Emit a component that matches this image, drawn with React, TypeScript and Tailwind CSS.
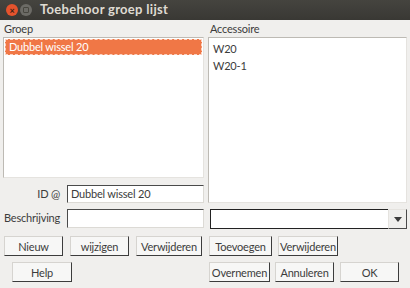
import React from "react";

function Btn({ children, className = "" }: { children: React.ReactNode; className?: string }) {
  return (
    <button
      className={`shrink-0 px-0 whitespace-nowrap h-[20px] bg-[#f7f7f6] border border-[#d6d4d0] border-r-[#3c3c3c] border-b-[#3c3c3c] text-[11px] tracking-[-0.2px] leading-none text-[#3c3c3c] flex items-center justify-center ${className}`}
    >
      {children}
    </button>
  );
}

export default function App() {
  return (
    <div className="w-[410px] h-[288px] bg-[#f0efed] text-[#3c3c3c] overflow-hidden font-['Lato','Liberation_Sans',sans-serif]">
      {/* title bar */}
      <div className="h-[20px] bg-gradient-to-b from-[#45443f] to-[#393834] flex items-center pl-[6px] gap-[2px]">
        <div className="w-[12px] h-[12px] rounded-full bg-[#e5532d] flex items-center justify-center text-[9px] leading-none text-[#3a1e12] font-bold">×</div>
        <div className="w-[12px] h-[12px] rounded-full bg-[#6c6b66] flex items-center justify-center">
          <div className="w-[6px] h-[6px] rounded-[1px] border border-[#47463f]" />
        </div>
        <span className="ml-[6px] text-[13px] font-bold tracking-[0.3px] text-[#dfdbd2]">Toebehoor groep lijst</span>
      </div>

      <div className="px-[3px] text-[11px] tracking-[-0.2px]">
        <div className="flex gap-[4px]">
          {/* left */}
          <div className="w-[201px] flex flex-col">
            <div className="h-[17px] pl-[1px] pt-[2px] leading-[14px]">Groep</div>
            <div className="h-[141px] bg-white border border-[#bdbab4] border-r-[#e5e3df] border-b-[#e5e3df] p-[1px]">
              <div className="h-[16px] bg-[#f07746] border border-dashed border-[#fbd3c2] text-white leading-[14px] pl-[3px]">
                Dubbel wissel 20
              </div>
            </div>
            <div className="flex items-center mt-[7px] h-[18px]">
              <span className="w-[64px] text-right pr-[7px]">ID @</span>
              <div className="flex-1 h-[18px] bg-white border border-[#4a4a4a] border-r-[#dcdad5] border-b-[#dcdad5] leading-[16px] pl-[3px]">
                Dubbel wissel 20
              </div>
            </div>
          </div>
          {/* right */}
          <div className="flex-1 flex flex-col">
            <div className="h-[17px] pl-[2px] pt-[2px] leading-[14px]">Accessoire</div>
            <div className="flex-1 bg-white border border-[#bdbab4] border-r-[#e5e3df] border-b-[#e5e3df] pt-[2px] pl-[4px] leading-[17px]">
              <div>W20</div>
              <div>W20-1</div>
            </div>
          </div>
        </div>

        <div className="flex gap-[4px] mt-[6px]">
          <div className="w-[201px] flex items-center h-[19px]">
            <span className="w-[64px] shrink-0 whitespace-nowrap pl-[1px]">Beschrijving</span>
            <div className="flex-1 h-[19px] bg-white border border-[#4a4a4a] border-r-[#dcdad5] border-b-[#dcdad5]" />
          </div>
          <div className="flex-1 flex h-[20px] ml-[2px]">
            <div className="flex-1 bg-white border border-[#222] border-r-0 border-b-[#222]" />
            <div className="w-[19px] bg-[#f0efed] border border-[#e5e3df] border-r-[#4a4a4a] border-b-[#4a4a4a] flex items-center justify-center">
              <svg width="8" height="5" viewBox="0 0 8 5">
                <path d="M0 0 L8 0 L4 5 Z" fill="#3c3c3c" />
              </svg>
            </div>
          </div>
        </div>

        <div className="flex mt-[7px]">
          <Btn className="ml-[1px] w-[59px]">Nieuw</Btn>
          <Btn className="ml-[7px] w-[59px]">wijzigen</Btn>
          <Btn className="ml-[7px] w-[66px]">Verwijderen</Btn>
          <Btn className="ml-[7px] w-[63px]">Toevoegen</Btn>
          <Btn className="ml-[6px] w-[60px]">Verwijderen</Btn>
        </div>

        <div className="flex mt-[6px]">
          <Btn className="ml-[9px] w-[60px]">Help</Btn>
          <Btn className="ml-[137px] w-[61px]">Overnemen</Btn>
          <Btn className="ml-[5px] w-[59px]">Annuleren</Btn>
          <Btn className="ml-[6px] w-[59px]">OK</Btn>
        </div>
      </div>
    </div>
  );
}
